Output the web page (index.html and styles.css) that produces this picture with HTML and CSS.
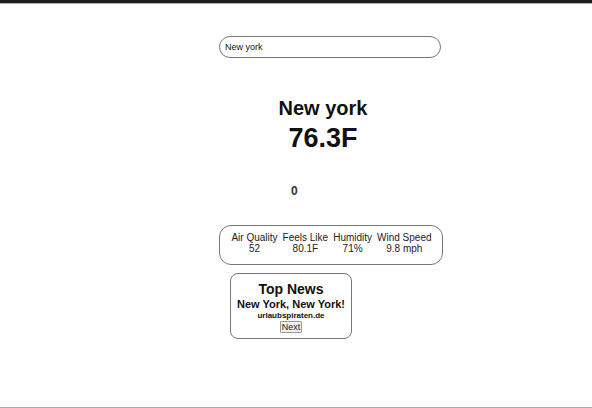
FILE: index.html
```html
<!DOCTYPE html>
<html>
<head>
<meta charset="utf-8">
<link rel="stylesheet" href="styles.css">
</head>
<body>
<div class="page">
  <div class="content">
    <input class="search" type="text" value="New york">
    <div class="current">
      <h1 class="city">New york</h1>
      <div class="temp">76.3F</div>
    </div>
    <div class="zero">0</div>
    <div class="stats">
      <div class="stat"><span>Air Quality</span><span>52</span></div>
      <div class="stat"><span>Feels Like</span><span>80.1F</span></div>
      <div class="stat"><span>Humidity</span><span>71%</span></div>
      <div class="stat"><span>Wind Speed</span><span>9.8 mph</span></div>
    </div>
    <div class="news">
      <div class="news-title">Top News</div>
      <div class="headline">New York, New York!</div>
      <div class="source">urlaubspiraten.de</div>
      <button class="next">Next</button>
    </div>
  </div>
</div>
</body>
</html>
```

FILE: styles.css
```css
html, body {
  margin: 0;
  padding: 0;
  background: #fff;
}
body {
  font-family: "Liberation Sans", Arial, sans-serif;
  color: #111;
  width: 592px;
  height: 408px;
  overflow: hidden;
}
.page {
  box-sizing: border-box;
  height: 408px;
  border-top: 3px solid #1c1c1c;
  border-bottom: 1px solid #aaa;
  box-shadow: inset 0 1px 0 #b0b0b0;
}
.content {
  display: flex;
  flex-direction: column;
  margin-left: 219px;
  width: 224px;
  padding-top: 33px;
}
.search {
  box-sizing: border-box;
  width: 222px;
  height: 22px;
  border: 1px solid #777;
  border-radius: 11px;
  padding: 0 5px;
  font-family: "Liberation Sans", Arial, sans-serif;
  font-size: 9px;
  color: #111;
  outline: none;
}
.current {
  display: flex;
  flex-direction: column;
  align-items: center;
  padding-right: 16px;
  margin-top: 38px;
}
.city {
  margin: 0;
  font-size: 20px;
  line-height: 24px;
  font-weight: bold;
}
.temp {
  font-size: 27px;
  line-height: 32px;
  font-weight: bold;
  margin-top: 2px;
}
.zero {
  font-size: 12px;
  font-weight: bold;
  line-height: 14px;
  margin-top: 30px;
  margin-left: 72px;
  color: #333;
}
.stats {
  box-sizing: border-box;
  display: flex;
  justify-content: center;
  gap: 5px;
  width: 224px;
  height: 40px;
  margin-top: 27px;
  border: 1px solid #777;
  border-radius: 12px;
  padding-top: 6px;
  padding-left: 1px;
}
.stat {
  display: flex;
  flex-direction: column;
  align-items: center;
  font-size: 10px;
  line-height: 11px;
  color: #222;
}
.news {
  box-sizing: border-box;
  display: flex;
  flex-direction: column;
  align-items: center;
  width: 122px;
  height: 66px;
  margin-top: 8px;
  margin-left: 11px;
  border: 1px solid #777;
  border-radius: 8px;
  padding-top: 7px;
}
.news-title {
  font-size: 14px;
  line-height: 17px;
  font-weight: bold;
}
.headline {
  font-size: 11px;
  line-height: 12px;
  font-weight: bold;
}
.source {
  font-size: 8px;
  line-height: 10px;
  font-weight: bold;
  margin-top: 1px;
}
.next {
  font-family: "Liberation Sans", Arial, sans-serif;
  font-size: 9px;
  line-height: 10px;
  padding: 0 1px;
  margin-top: 0;
  background: #efefef;
  border: 1px solid #999;
  border-radius: 1px;
  color: #222;
}
```
